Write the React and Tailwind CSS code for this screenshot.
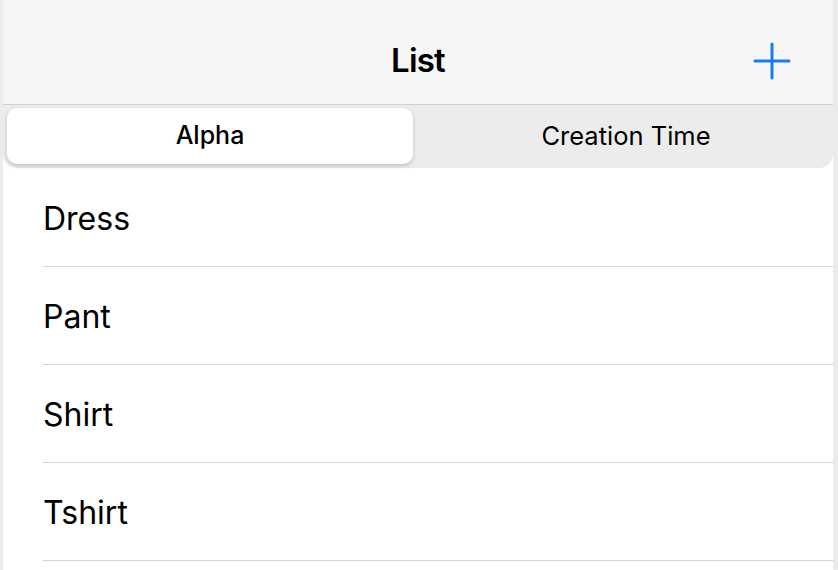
import React from "react";

const items = ["Dress", "Pant", "Shirt", "Tshirt"];

const PlusIcon = () => (
  <svg width="38" height="38" viewBox="0 0 38 38" fill="none">
    <path d="M19 2v34M2 19h34" stroke="#1a7cf6" strokeWidth="3" strokeLinecap="round" />
  </svg>
);

export default function App() {
  const [sort, setSort] = React.useState("alpha");

  return (
    <div
      className="w-[838px] h-[570px] overflow-hidden bg-[#ebebeb] pl-[3px] pr-[5px]"
      style={{ fontFamily: "Inter, 'Noto Sans', sans-serif" }}
    >
      <div className="h-full bg-white flex flex-col">
        {/* nav bar */}
        <div className="h-[105px] shrink-0 bg-[#f6f6f6] border-b border-[#cfcfcf] flex items-center relative pt-[18px]">
          <div className="flex-1 text-center text-[33px] font-semibold text-black tracking-tight">List</div>
          <button className="absolute right-[42px] top-[42px]">
            <PlusIcon />
          </button>
        </div>

        {/* segmented control */}
        <div className="h-[63px] shrink-0 bg-[#ececec] rounded-b-[14px] flex gap-[10px] px-[4px] pt-[3px] pb-[4px]">
          <button
            onClick={() => setSort("alpha")}
            className={`flex-1 rounded-[10px] text-[25px] font-medium text-black ${
              sort === "alpha" ? "bg-white shadow-[0_2px_4px_rgba(0,0,0,0.18)]" : ""
            }`}
          >
            Alpha
          </button>
          <button
            onClick={() => setSort("time")}
            className={`flex-1 rounded-[10px] text-[25.5px] text-black ${
              sort === "time" ? "bg-white shadow-[0_2px_4px_rgba(0,0,0,0.18)]" : ""
            }`}
          >
            Creation Time
          </button>
        </div>

        {/* rows */}
        <div className="flex flex-col pl-[40px] pt-[1px]">
          {items.map((item) => (
            <div key={item} className="h-[98px] flex items-center border-b border-[#d4d4d4] text-[32px] text-black pt-[2px]">
              {item}
            </div>
          ))}
        </div>
      </div>
    </div>
  );
}
